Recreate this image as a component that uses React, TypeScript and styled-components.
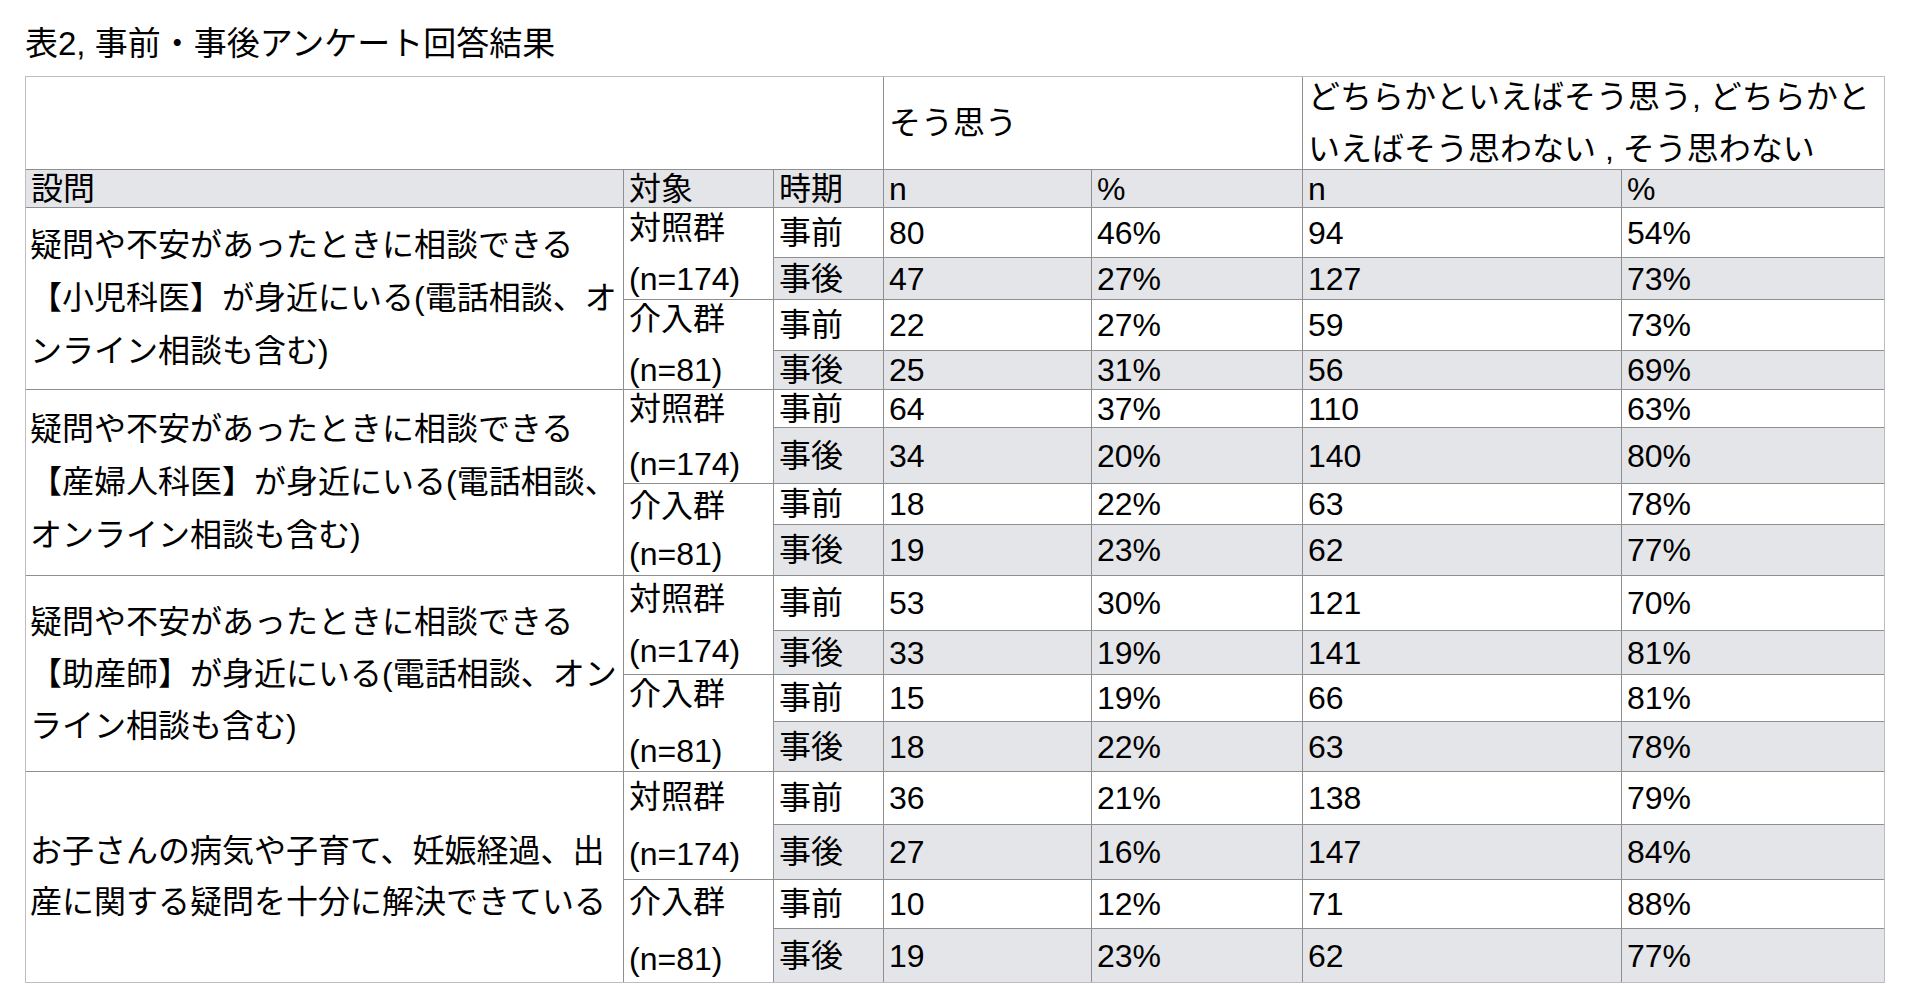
import React from "react";
import styled, { createGlobalStyle } from "styled-components";

const GlobalStyle = createGlobalStyle`
  html, body {
    margin: 0;
    padding: 0;
    background: #ffffff;
  }
  body {
    font-family: "Liberation Sans", "Noto Sans CJK JP", sans-serif;
    color: #000000;
  }
`;

const Page = styled.div`
  padding: 24px 0 0 25px;
`;

const Title = styled.h1`
  margin: 0 0 12px 0;
  font-size: 33px;
  font-weight: 400;
  line-height: 40px;
  height: 40px;
  white-space: nowrap;
`;

const Grid = styled.div<{ $rows: string }>`
  display: grid;
  width: fit-content;
  grid-template-columns: 597px 149px 109px 207px 210px 318px 262px;
  grid-template-rows: ${(p) => p.$rows};
  gap: 1px;
  background: #8f8f8f;
  border: 1px solid #bdbdbd;
`;

const Cell = styled.div<{ $span?: number; $rows?: number; $shade?: boolean; $lh?: number }>`
  grid-column: span ${(p) => p.$span ?? 1};
  grid-row: span ${(p) => p.$rows ?? 1};
  background: ${(p) => (p.$shade ? "#e4e5e9" : "#ffffff")};
  display: flex;
  align-items: center;
  padding: 0 5px;
  font-size: 32px;
  line-height: ${(p) => p.$lh ?? 40}px;
  white-space: nowrap;
  overflow: visible;
  min-width: 0;
`;

const HeadCell = styled(Cell).attrs({ $shade: true })``;

const QuestionCell = styled(Cell).attrs({ $rows: 4 })`
  padding-left: 4px;
`;

const GroupCell = styled(Cell).attrs({ $rows: 2 })``;

const Lines = styled.span`
  display: block;
`;

type Row = { period: string; n1: string; p1: string; n2: string; p2: string };
type Group = { label: string; size: string; lh: number; rows: [Row, Row] };
type Question = { lines: string[]; lh: number; heights: number[]; groups: [Group, Group] };

const r = (period: string, n1: string, p1: string, n2: string, p2: string): Row => ({
  period,
  n1,
  p1,
  n2,
  p2,
});

const questions: Question[] = [
  {
    lines: ["疑問や不安があったときに相談できる", "【小児科医】が身近にいる(電話相談、オ", "ンライン相談も含む)"],
    lh: 53,
    heights: [49, 41, 50, 38],
    groups: [
      { label: "対照群", size: "(n=174)", lh: 51, rows: [r("事前", "80", "46%", "94", "54%"), r("事後", "47", "27%", "127", "73%")] },
      { label: "介入群", size: "(n=81)", lh: 51, rows: [r("事前", "22", "27%", "59", "73%"), r("事後", "25", "31%", "56", "69%")] },
    ],
  },
  {
    lines: ["疑問や不安があったときに相談できる", "【産婦人科医】が身近にいる(電話相談、", "オンライン相談も含む)"],
    lh: 53,
    heights: [37, 55, 40, 50],
    groups: [
      { label: "対照群", size: "(n=174)", lh: 55, rows: [r("事前", "64", "37%", "110", "63%"), r("事後", "34", "20%", "140", "80%")] },
      { label: "介入群", size: "(n=81)", lh: 48, rows: [r("事前", "18", "22%", "63", "78%"), r("事後", "19", "23%", "62", "77%")] },
    ],
  },
  {
    lines: ["疑問や不安があったときに相談できる", "【助産師】が身近にいる(電話相談、オン", "ライン相談も含む)"],
    lh: 52,
    heights: [54, 43, 46, 49],
    groups: [
      { label: "対照群", size: "(n=174)", lh: 52, rows: [r("事前", "53", "30%", "121", "70%"), r("事後", "33", "19%", "141", "81%")] },
      { label: "介入群", size: "(n=81)", lh: 57, rows: [r("事前", "15", "19%", "66", "81%"), r("事後", "18", "22%", "63", "78%")] },
    ],
  },
  {
    lines: ["お子さんの病気や子育て、妊娠経過、出", "産に関する疑問を十分に解決できている"],
    lh: 51,
    heights: [52, 54, 48, 53],
    groups: [
      { label: "対照群", size: "(n=174)", lh: 57, rows: [r("事前", "36", "21%", "138", "79%"), r("事後", "27", "16%", "147", "84%")] },
      { label: "介入群", size: "(n=81)", lh: 57, rows: [r("事前", "10", "12%", "71", "88%"), r("事後", "19", "23%", "62", "77%")] },
    ],
  },
];

const rowTemplate = ["92px", "37px", ...questions.flatMap((q) => q.heights.map((h) => `${h}px`))].join(" ");

const multiline = (lines: string[]) =>
  lines.map((l, i) => (
    <React.Fragment key={i}>
      {i > 0 && <br />}
      {l}
    </React.Fragment>
  ));

const DataRow: React.FC<{ row: Row }> = ({ row }) => {
  const shade = row.period === "事後";
  return (
    <>
      <Cell $shade={shade}>{row.period}</Cell>
      <Cell $shade={shade}>{row.n1}</Cell>
      <Cell $shade={shade}>{row.p1}</Cell>
      <Cell $shade={shade}>{row.n2}</Cell>
      <Cell $shade={shade}>{row.p2}</Cell>
    </>
  );
};

export default function App() {
  return (
    <Page>
      <GlobalStyle />
      <Title>表2, 事前・事後アンケート回答結果</Title>
      <Grid $rows={rowTemplate}>
        <Cell $span={3} />
        <Cell $span={2}>そう思う</Cell>
        <Cell $span={2} $lh={52}>
          <Lines>{multiline(["どちらかといえばそう思う, どちらかと", "いえばそう思わない , そう思わない"])}</Lines>
        </Cell>

        <HeadCell>設問</HeadCell>
        <HeadCell>対象</HeadCell>
        <HeadCell>時期</HeadCell>
        <HeadCell>n</HeadCell>
        <HeadCell>%</HeadCell>
        <HeadCell>n</HeadCell>
        <HeadCell>%</HeadCell>

        {questions.map((q, qi) => (
          <React.Fragment key={qi}>
            <QuestionCell $lh={q.lh}>
              <Lines>{multiline(q.lines)}</Lines>
            </QuestionCell>
            {q.groups.map((g, gi) => (
              <React.Fragment key={gi}>
                <GroupCell $lh={g.lh}>
                  <Lines>{multiline([g.label, g.size])}</Lines>
                </GroupCell>
                <DataRow row={g.rows[0]} />
                <DataRow row={g.rows[1]} />
              </React.Fragment>
            ))}
          </React.Fragment>
        ))}
      </Grid>
    </Page>
  );
}
